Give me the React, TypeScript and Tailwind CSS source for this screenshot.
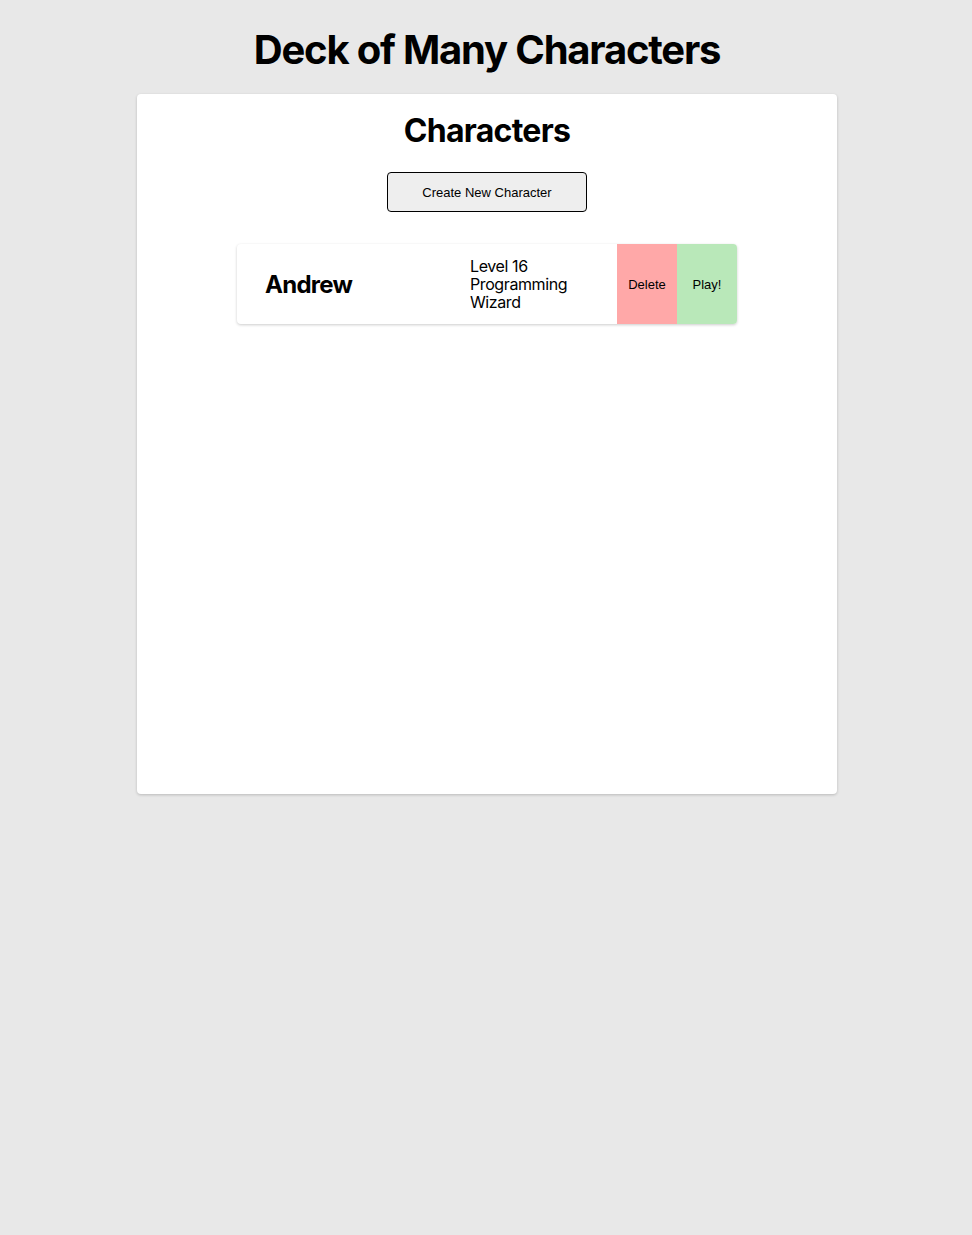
const characters = [
  { id: 1, name: 'Andrew', level: 16, className: 'Programming Wizard' },
];

export default function App() {
  return (
    <div className="min-h-[1235px] bg-[#e8e8e8] pl-[2px] pt-[26px] font-['Inter',sans-serif] text-black">
      <h1 className="text-center text-[40px] font-bold leading-[48px] tracking-[-0.03em]">Deck of Many Characters</h1>

      <main className="mx-auto mt-[20px] flex h-[700px] w-[700px] flex-col items-center rounded-[4px] bg-white pt-[17px] shadow-[0_1px_3px_rgba(0,0,0,0.2)]">
        <h2 className="text-[32px] font-bold leading-[40px] tracking-[-0.022em]">Characters</h2>

        <button
          type="button"
          className="mt-[21px] h-[40px] w-[200px] rounded-[4px] border border-black bg-[#eeeeee] pt-px font-['Liberation_Sans',Arial,sans-serif] text-[13px]"
        >
          Create New Character
        </button>

        <div className="mt-[32px] flex w-[500px] flex-col gap-2">
          {characters.map((c) => (
            <div
              key={c.id}
              className="flex h-[80px] overflow-hidden rounded-[4px] bg-white shadow-[0_1px_3px_rgba(0,0,0,0.2)]"
            >
              <div className="flex flex-1 items-center pl-[28px] pt-[2px] text-[24px] font-bold tracking-[-0.03em]">
                {c.name}
              </div>
              <div className="flex w-[147px] flex-col justify-center text-[16px] leading-[18px] tracking-[-0.025em]">
                <span>Level {c.level}</span>
                <span>{c.className}</span>
              </div>
              <button
                type="button"
                className="w-[60px] bg-[#ffa8a8] pt-px font-['Liberation_Sans',Arial,sans-serif] text-[13px]"
              >
                Delete
              </button>
              <button
                type="button"
                className="w-[60px] bg-[#b9e8b9] pt-px font-['Liberation_Sans',Arial,sans-serif] text-[13px]"
              >
                Play!
              </button>
            </div>
          ))}
        </div>
      </main>
    </div>
  );
}
